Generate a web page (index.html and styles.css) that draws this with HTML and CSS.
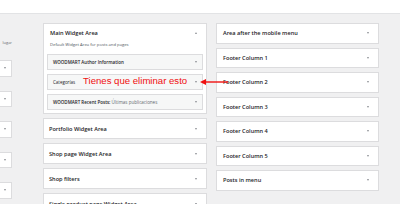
FILE: index.html
```html
<!DOCTYPE html>
<html lang="es">
<head>
<meta charset="utf-8">
<title>Widgets</title>
<link rel="stylesheet" href="styles.css">
</head>
<body>
<div class="topbar"></div>
<div class="page">
  <div class="avail">
    <p class="avail-text">lugar</p>
    <div class="avail-item"><span class="arr"></span></div>
    <div class="avail-item"><span class="arr"></span></div>
    <div class="avail-item"><span class="arr"></span></div>
    <div class="avail-item"><span class="arr"></span></div>
    <div class="avail-item"><span class="arr"></span></div>
  </div>
  <div class="col col-mid">
    <div class="sidebar open">
      <div class="sb-head"><h2 class="sb-title">Main Widget Area</h2><span class="arr up"></span></div>
      <p class="sb-desc">Default Widget Area for posts and pages</p>
      <div class="widgets">
        <div class="widget"><span class="w-title">WOODMART Author Information</span><span class="arr"></span></div>
        <div class="widget"><span class="w-title light">Categorías</span><span class="arr"></span></div>
        <div class="widget"><span class="w-title">WOODMART Recent Posts: <span class="in-title">Últimas publicaciones</span></span><span class="arr"></span></div>
      </div>
    </div>
    <div class="sidebar"><h2 class="sb-title">Portfolio Widget Area</h2><span class="arr"></span></div>
    <div class="sidebar"><h2 class="sb-title">Shop page Widget Area</h2><span class="arr"></span></div>
    <div class="sidebar"><h2 class="sb-title">Shop filters</h2><span class="arr"></span></div>
    <div class="sidebar"><h2 class="sb-title">Single product page Widget Area</h2><span class="arr"></span></div>
  </div>
  <div class="col col-right">
    <div class="sidebar r"><h2 class="sb-title">Area after the mobile menu</h2><span class="arr"></span></div>
    <div class="sidebar r"><h2 class="sb-title">Footer Column 1</h2><span class="arr"></span></div>
    <div class="sidebar r"><h2 class="sb-title">Footer Column 2</h2><span class="arr"></span></div>
    <div class="sidebar r"><h2 class="sb-title">Footer Column 3</h2><span class="arr"></span></div>
    <div class="sidebar r"><h2 class="sb-title">Footer Column 4</h2><span class="arr"></span></div>
    <div class="sidebar r"><h2 class="sb-title">Footer Column 5</h2><span class="arr"></span></div>
    <div class="sidebar r"><h2 class="sb-title">Posts in menu</h2><span class="arr"></span></div>
  </div>
</div>
<div class="note">Tienes que eliminar esto</div>
<svg class="note-arrow" width="30" height="8" viewBox="0 0 30 8" aria-hidden="true">
  <line x1="4" y1="4" x2="28" y2="4" stroke="#f01010" stroke-width="1.4"/>
  <polygon points="0,4 6,1 6,7" fill="#f01010"/>
</svg>
</body>
</html>
```

FILE: styles.css
```css
* { box-sizing: border-box; }
html, body { margin: 0; padding: 0; }
body {
  width: 400px;
  height: 204px;
  overflow: hidden;
  background: #f0f0f1;
  font-family: "Open Sans", "Noto Sans", sans-serif;
  color: #1d2327;
  position: relative;
}
.topbar {
  height: 14px;
  background: #fff;
  border-bottom: 1px solid #e2e3e5;
}
.page {
  display: flex;
  align-items: flex-start;
  padding-top: 9px;
}
.avail {
  width: 12px;
  margin-right: 31px;
  display: flex;
  flex-direction: column;
}
.avail-text {
  margin: 17px 0 0;
  height: 6px;
  font-size: 4px;
  line-height: 6px;
  color: #646970;
  text-align: right;
  white-space: nowrap;
}
.avail-text + .avail-item { margin-top: 14px; }
.avail-item {
  height: 16.5px;
  margin-bottom: 14px;
  background: #fff;
  border: 1px solid #dcdcde;
  border-left: none;
  display: flex;
  align-items: center;
  justify-content: flex-end;
  padding-right: 5px;
}
.col { display: flex; flex-direction: column; }
.col-mid { width: 164px; margin-right: 9px; gap: 4px; }
.col-right { width: 163px; gap: 4px; }
.sidebar {
  background: #fff;
  border: 1px solid #dcdcde;
  height: 21px;
  display: flex;
  align-items: center;
  justify-content: space-between;
  padding: 0 9px 0 5px;
}
.sidebar.r { height: 20.5px; padding-left: 6px; }
.sidebar.open {
  height: auto;
  display: block;
  padding: 0 3px 3px;
}
.sb-head {
  height: 18px;
  display: flex;
  align-items: center;
  justify-content: space-between;
  padding: 0 6px 0 3px;
}
.sb-title {
  margin: 0;
  font-size: 5.6px;
  font-weight: 600;
  line-height: 8px;
  white-space: nowrap;
}
.sb-desc {
  margin: 0 0 0 3px;
  height: 6px;
  font-size: 4.2px;
  line-height: 6px;
  color: #50575e;
  white-space: nowrap;
}
.widgets {
  margin-top: 6px;
  display: flex;
  flex-direction: column;
  gap: 4px;
}
.widget {
  height: 16px;
  background: #f6f7f7;
  border: 1px solid #dcdcde;
  display: flex;
  align-items: center;
  justify-content: space-between;
  padding: 0 5px 0 5px;
}
.w-title {
  font-size: 4.5px;
  font-weight: 600;
  line-height: 6px;
  white-space: nowrap;
  color: #1d2327;
}
.w-title.light { font-weight: 400; }
.in-title { font-weight: 400; color: #646970; }
.arr {
  width: 0;
  height: 0;
  border-left: 1.6px solid transparent;
  border-right: 1.6px solid transparent;
  border-top: 2.2px solid #8c8f94;
  flex: none;
}
.arr.up {
  border-top: none;
  border-bottom: 2.2px solid #8c8f94;
}
.note {
  position: absolute;
  left: 83px;
  top: 75px;
  font-family: "Liberation Sans", Arial, sans-serif;
  font-size: 9.6px;
  line-height: 12px;
  color: #f01010;
  white-space: nowrap;
}
.note-arrow {
  position: absolute;
  left: 200px;
  top: 78px;
}
```
